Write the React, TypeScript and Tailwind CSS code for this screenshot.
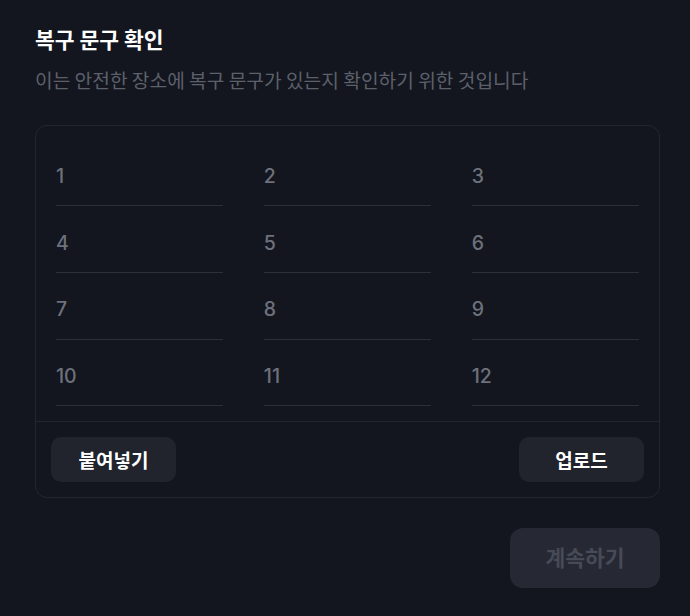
import React from "react";

const nums = Array.from({ length: 12 }, (_, i) => i + 1);

export default function App() {
  return (
    <div
      className="w-[690px] h-[616px] bg-[#13161e] pl-[35px] pr-[30px] pt-[24px]"
      style={{ fontFamily: '"Noto Sans CJK KR", Inter, sans-serif' }}
    >
      <h1 className="text-[21.5px] font-bold text-white leading-[30px]">복구 문구 확인</h1>
      <p className="mt-[12px] text-[19.2px] leading-[28px] text-[#5c606b]">
        이는 안전한 장소에 복구 문구가 있는지 확인하기 위한 것입니다
      </p>
      <div className="mt-[31px] border border-[#23262f] rounded-[12px]">
        <div className="grid grid-cols-3 gap-x-[40.5px] gap-y-[14.33px] px-[20px] pt-[28px] pb-[15px]">
          {nums.map((n) => (
            <div
              key={n}
              className="h-[52.33px] border-b border-[#2c2f38] pt-[8px] text-[19.5px] font-medium leading-[28px] text-[#6d717c]"
              style={{ fontFamily: "Inter, sans-serif" }}
            >
              {n}
            </div>
          ))}
        </div>
        <div className="border-t border-[#23262f] flex justify-between p-[15px]">
          <button className="w-[125px] h-[45px] rounded-[10px] bg-[#21232d] text-white font-bold text-[19px]">
            붙여넣기
          </button>
          <button className="w-[125px] h-[45px] rounded-[10px] bg-[#21232d] text-white font-bold text-[19px]">
            업로드
          </button>
        </div>
      </div>
      <div className="flex justify-end mt-[30px]">
        <button className="w-[150px] h-[60px] rounded-[13px] bg-[#262833] text-[#474a57] font-bold text-[21.5px] pb-[3px]">
          계속하기
        </button>
      </div>
    </div>
  );
}
